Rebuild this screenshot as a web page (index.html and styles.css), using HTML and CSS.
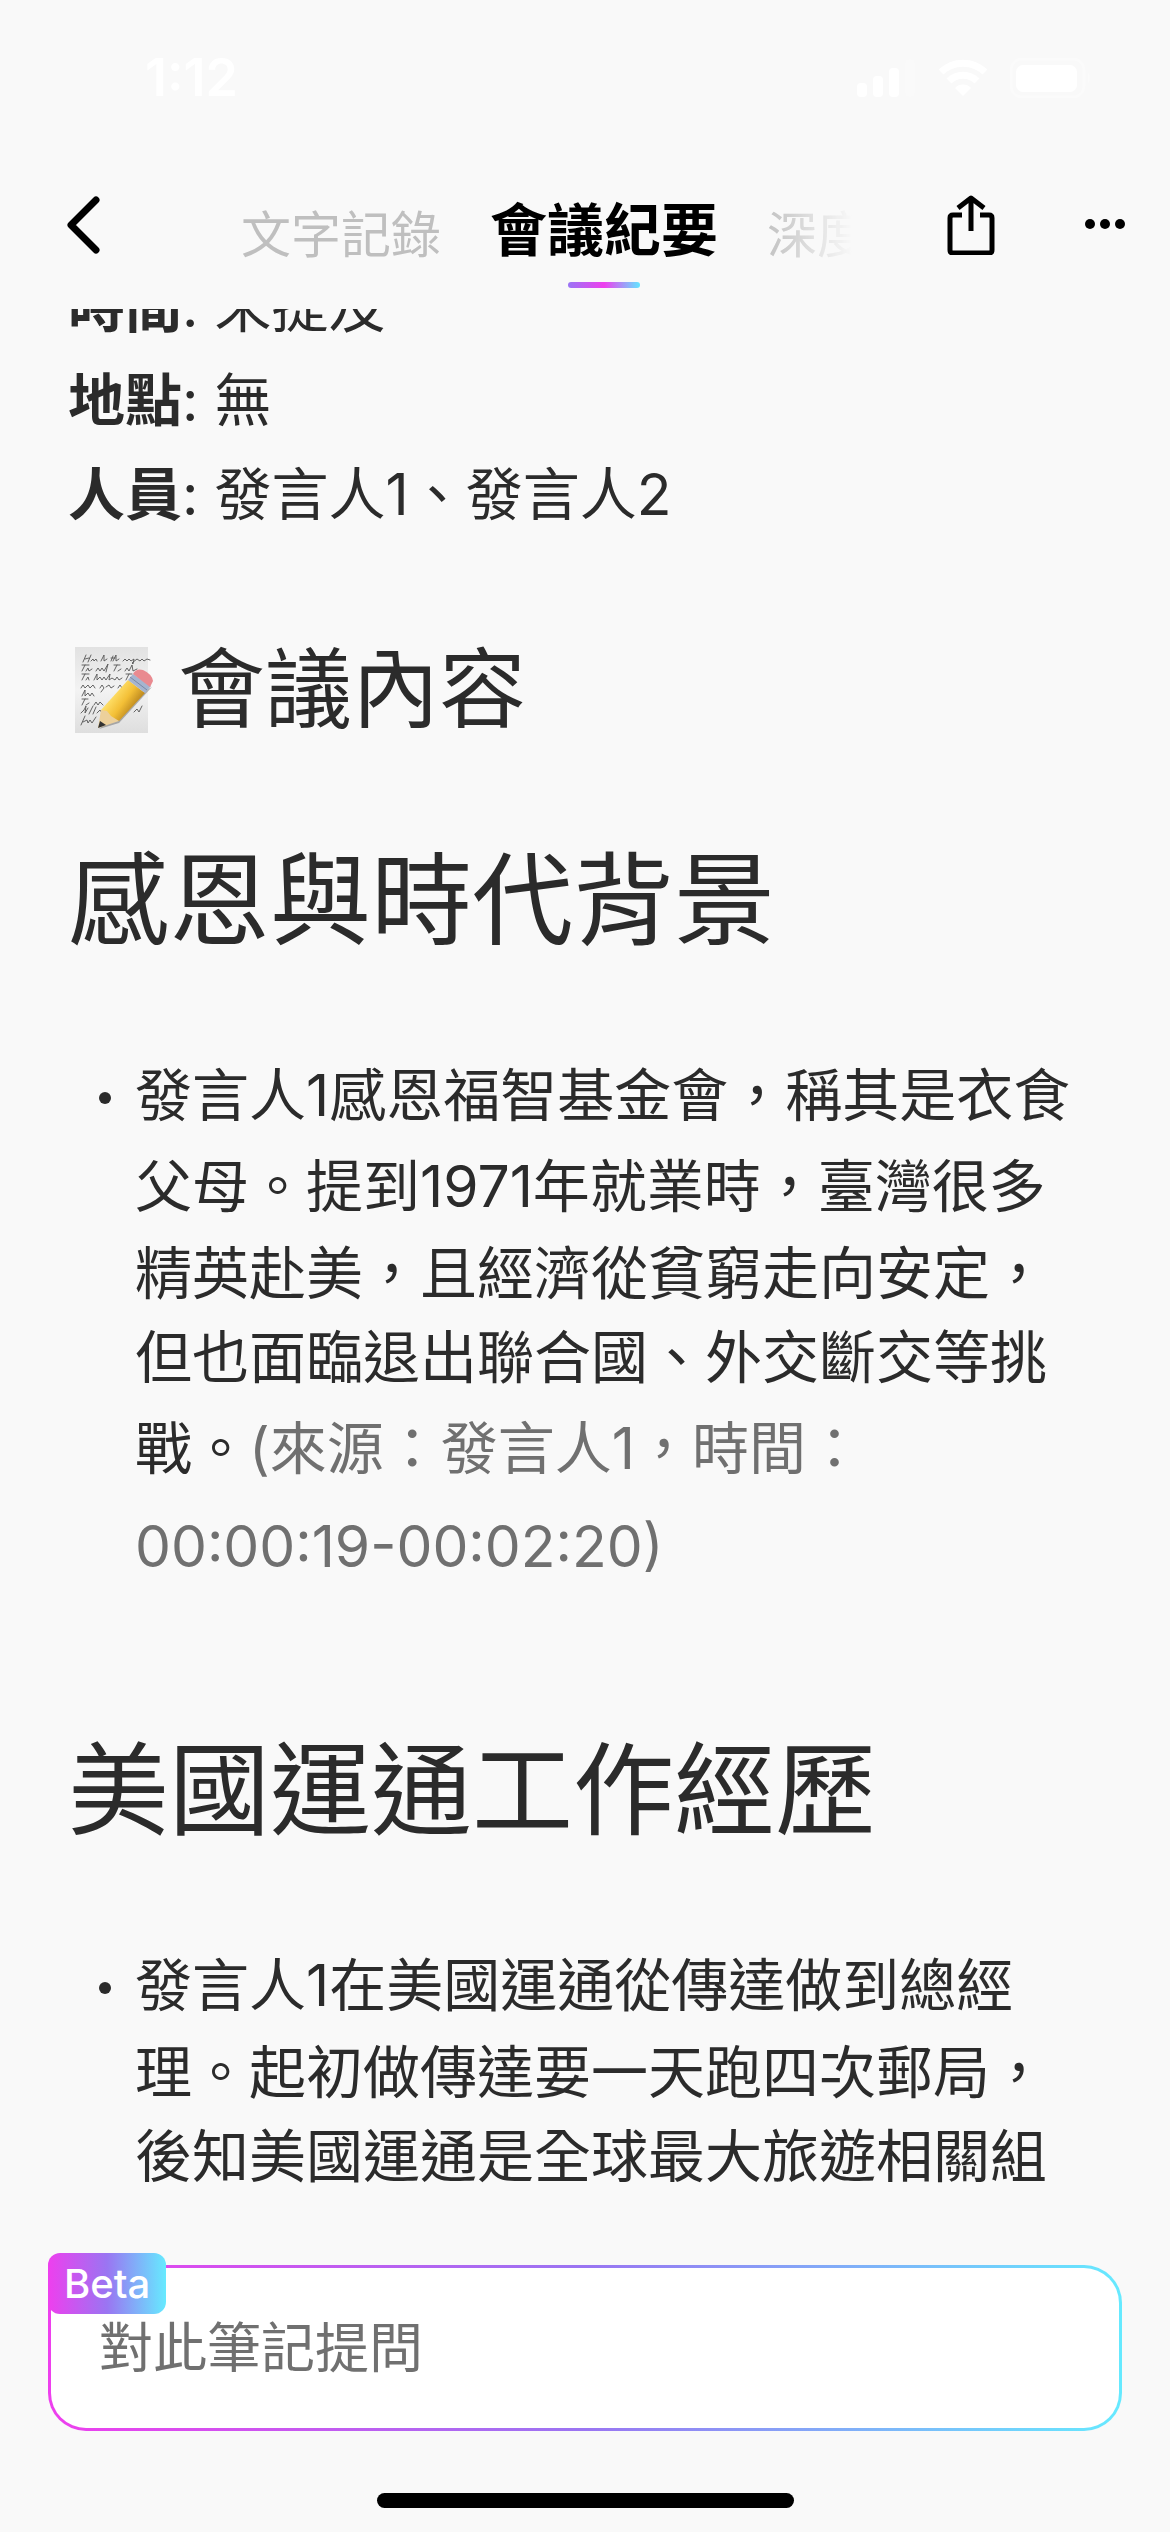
FILE: index.html
```html
<!DOCTYPE html>
<html lang="zh-Hant">
<head>
    <meta charset="UTF-8">
    <meta name="viewport" content="width=device-width, initial-scale=1.0">
    <title>會議紀要</title>
    <link rel="stylesheet" href="styles.css">
</head>
<body>
    <div class="status-bar">
        <span class="status-time">1:12</span>
        <div class="status-icons">
            <svg width="60" height="38" viewBox="0 0 60 38" fill="#fff">
                <rect x="1" y="24" width="10" height="14" rx="4"/>
                <rect x="17" y="17" width="10" height="21" rx="4"/>
                <rect x="33" y="9" width="10" height="29" rx="4"/>
                <rect x="49" y="0" width="10" height="38" rx="4" opacity="0.15"/>
            </svg>
            <svg width="50" height="38" viewBox="0 0 50 38" fill="none" stroke="#fff" stroke-width="7">
                <path d="M3 13a32 32 0 0 1 44 0"/>
                <path d="M11 22a20 20 0 0 1 28 0"/>
                <path d="M25 37l-8-8a11 11 0 0 1 16 0z" fill="#fff" stroke="none"/>
            </svg>
            <svg width="80" height="40" viewBox="0 0 80 40" fill="#fff">
                <rect x="1" y="1" width="73" height="38" rx="11" fill="none" stroke="#fff" stroke-width="3" opacity="0.3"/>
                <rect x="6" y="7" width="61" height="27" rx="7"/>
                <path d="M78 14q4 6 0 12z" opacity="0.3"/>
            </svg>
        </div>
    </div>

    <header class="nav">
        <button class="icon-btn" type="button" aria-label="返回">
            <svg width="33" height="58" viewBox="0 0 33 58" fill="none" stroke="#000" stroke-width="7" stroke-linecap="round" stroke-linejoin="round">
                <path d="M29 4L4 29l25 25"/>
            </svg>
        </button>
        <nav class="tabs">
            <a href="#transcript" class="tab">文字記錄</a>
            <a href="#minutes" class="tab active">會議紀要</a>
            <a href="#depth" class="tab">深度</a>
        </nav>
        <div class="actions">
            <button class="icon-btn" type="button" aria-label="分享">
                <svg width="48" height="60" viewBox="0 0 48 60" fill="none" stroke="#000" stroke-width="5">
                    <path d="M15 20H6q-3 0-3 3v32q0 3 3 3h36q3 0 3-3V23q0-3-3-3h-9"/>
                    <path d="M24 36V4M11 13L24 3l13 10" stroke-linejoin="round"/>
                </svg>
            </button>
            <button class="icon-btn" type="button" aria-label="更多">
                <svg width="40" height="12" viewBox="0 0 40 12">
                    <circle cx="5" cy="5" r="5"/>
                    <circle cx="20" cy="5" r="5"/>
                    <circle cx="35" cy="5" r="5"/>
                </svg>
            </button>
        </div>
    </header>

    <main class="content" id="minutes">
        <div class="note">
            <div class="meta">
                <p><strong>時間</strong>: 未提及</p>
                <p><strong>地點</strong>: 無</p>
                <p><strong>人員</strong>: 發言人1、發言人2</p>
            </div>

            <h2 class="note-title">
                <svg class="memo" width="88" height="90" viewBox="0 0 88 90">
                    <defs>
                        <linearGradient id="paper" x1="0" y1="0" x2="0" y2="1">
                            <stop offset="0" stop-color="#e2e2e2"/>
                            <stop offset="0.5" stop-color="#f3f3f3"/>
                            <stop offset="1" stop-color="#dedede"/>
                        </linearGradient>
                        <linearGradient id="wood" gradientUnits="userSpaceOnUse" x1="44" y1="50" x2="66" y2="66">
                            <stop offset="0" stop-color="#ffe06a"/>
                            <stop offset="0.5" stop-color="#f3bf36"/>
                            <stop offset="1" stop-color="#b5811c"/>
                        </linearGradient>
                    </defs>
                    <rect x="7" y="2" width="73" height="86" fill="url(#paper)"/>
                    <g fill="none" stroke="#555" stroke-width="0.9" stroke-linecap="round" stroke-linejoin="round">
                        <path d="M15 17l3-7m-1 4l4-1m-1 4l3-7m0 6l2-2 1 2 2-2 1 2m4 0l3-6 0 6 3-2m4 2l2-5m-2 2h4m-2 3l3-6 0 6 3-2m4 2l2-2 2 2 2-2 2 2 3-2-1 5-1-1 5-4 3 2 2-2 2 2 3-2 3 1"/>
                        <path d="M14 26l3-6m-3 0h7m-3 6l2-3 1 3 3-2m4 2l2-3 2 3 2-3 2 3 4-7-2 8m8-1l3-6m-3 0h6m-2 6l3-2m4 2l2-3 2 3 3-6 1 6 4-2"/>
                        <path d="M14 35l3-6m-3 0h7m-3 6l2-3 1 3m5 0l3-6 0 6 3-3 2 3 2-3 2 3 4-6-1 6 3-2 3 2 2-3 2 3 3-2m4 2l3-6m-3 0h6"/>
                        <path d="M13 43l2-3 2 3 3-3 2 3 3-3 2 3m5 0l2-3 2 3-3 4m5-5l3-2 2 3 3-2m4 2l2-3 2 3m4 0l3-6"/>
                        <path d="M14 51l3-6 0 6 3-3 2 3 2-3 2 3"/>
                        <path d="M14 60l3-6m-3 0h6m-2 6l3-2m5 2l2-3 2 3 2-3 3 3m4 0l2-3"/>
                        <path d="M13 68l3-3 2-4-1 7 3-5m1 6l4-8m0 8l3-7m1 6l3-3 2 3 4-6"/>
                        <path d="M66 67l3-3 2 3 3-6"/>
                        <path d="M13 80l4-9m-2 6l4-2 1 3 2-3 2 3 4-6"/>
                    </g>
                    <path d="M31 84l20-6 33-36-6 3z" fill="#333" opacity="0.35"/>
                    <path d="M33 65l27-30 17 13-26 28-10-3z" fill="url(#wood)"/>
                    <path d="M33 65l6 1 4 5 8 5-21 7z" fill="#ecd09b"/>
                    <path d="M30 83l2-7 6 4z" fill="#333"/>
                    <path d="M60 35l5-6 18 12-6 7z" fill="#a5b4cf"/>
                    <path d="M62 32l17 13" stroke="#7888a6" fill="none"/>
                    <path d="M65 29q3-6 10-4 9 4 10 11l-3 6z" fill="#e98a90"/>
                </svg>
                <span>會議內容</span>
            </h2>

            <section class="topic">
                <h3>感恩與時代背景</h3>
                <ul>
                    <li>
                        <p>發言人<span class="num">1</span>感恩福智基金會，稱其是衣食父母。提到<span class="num">1971</span>年就業時，臺灣很多精英赴美，且經濟從貧窮走向安定，但也面臨退出聯合國、外交斷交等挑戰。<span class="source">(來源：發言人1，時間：00:00:19-00:02:20)</span></p>
                    </li>
                </ul>
            </section>

            <section class="topic">
                <h3>美國運通工作經歷</h3>
                <ul>
                    <li>
                        <p>發言人<span class="num">1</span>在美國運通從傳達做到總經理。起初做傳達要一天跑四次郵局，後知美國運通是全球最大旅遊相關組</p>
                    </li>
                </ul>
            </section>
        </div>
    </main>

    <footer class="footer">
        <div class="ask-box">
            <label class="beta" for="ask">Beta</label>
            <input id="ask" type="text" placeholder="對此筆記提問">
        </div>
        <div class="home-indicator"></div>
    </footer>
</body>
</html>
```

FILE: styles.css
```css
* {
    margin: 0;
    padding: 0;
    box-sizing: border-box;
}

body {
    display: flex;
    flex-direction: column;
    height: 100vh;
    overflow: hidden;
    font-family: Inter, 'Noto Sans CJK TC', sans-serif;
    font-size: 57px;
    background: #f9f9f9;
    color: #2b2b2b;
}

svg {
    display: block;
    flex-shrink: 0;
}

/* status bar */
.status-bar {
    display: flex;
    align-items: center;
    justify-content: space-between;
    height: 141px;
    padding: 14px 80px 0 145px;
    flex-shrink: 0;
}

.status-time {
    font-size: 52px;
    font-weight: 600;
    color: #fff;
}

.status-icons {
    display: flex;
    align-items: center;
    gap: 22px;
}

/* navigation */
.nav {
    display: flex;
    align-items: center;
    height: 168px;
    padding: 0 45px 0 67px;
    flex-shrink: 0;
}

.icon-btn {
    border: none;
    background: none;
    cursor: pointer;
}

.tabs {
    display: flex;
    align-items: center;
    flex: 1;
    gap: 49px;
    height: 100%;
    margin: 0 95px 0 141px;
    padding-top: 12px;
    overflow: hidden;
    -webkit-mask-image: linear-gradient(to right, #000 calc(100% - 90px), transparent);
    mask-image: linear-gradient(to right, #000 calc(100% - 90px), transparent);
}

.tab {
    flex-shrink: 0;
    font-size: 50px;
    color: #bfbfbf;
    text-decoration: none;
    white-space: nowrap;
}

.tab.active {
    position: relative;
    font-size: 57px;
    line-height: 114px;
    font-weight: bold;
    color: #000;
}

.tab.active::after {
    content: '';
    position: absolute;
    bottom: 0;
    left: 50%;
    width: 72px;
    height: 6px;
    margin-left: -36px;
    border-radius: 3px;
    background: linear-gradient(to right, #9a75f5, #ee3fee 50%, #62e6ff);
}

.actions {
    display: flex;
    align-items: center;
    gap: 90px;
}

/* note, scrolled part way down */
.content {
    flex: 1;
    min-height: 0;
    padding: 0 68px;
    overflow: hidden;
}

.note {
    margin-top: -49px;
}

.meta {
    line-height: 94px;
}

.note-title {
    display: flex;
    align-items: center;
    gap: 22px;
    margin-top: 88px;
    font-size: 87px;
    font-weight: normal;
    line-height: 120px;
}

.topic {
    margin-top: 80px;
}

.topic + .topic {
    margin-top: 124px;
}

.topic h3 {
    font-size: 101px;
    font-weight: normal;
    line-height: 140px;
}

.topic ul {
    margin-top: 80px;
    list-style: none;
}

.topic li {
    display: flex;
    gap: 24px;
    padding-left: 31px;
    line-height: 84px;
}

.topic li::before {
    content: '';
    flex: none;
    width: 12px;
    height: 12px;
    margin-top: 42px;
    border-radius: 50%;
    background: #2b2b2b;
}

.num {
    line-height: 91px;
}

.source {
    line-height: 98px;
    color: #707070;
}

/* question box */
.footer {
    padding: 60px 48px 24px;
    flex-shrink: 0;
}

.ask-box {
    position: relative;
    border: 3px solid transparent;
    border-radius: 38px;
    background: linear-gradient(#fff, #fff) padding-box,
        linear-gradient(to right, #ee3fee, #9a75f2 50%, #66eaff) border-box;
}

.ask-box input {
    display: block;
    width: 100%;
    height: 160px;
    padding: 0 48px;
    border: none;
    outline: none;
    background: none;
    font-family: inherit;
    font-size: 54px;
    color: #2b2b2b;
}

.ask-box input::placeholder {
    color: #707070;
    opacity: 1;
}

.beta {
    position: absolute;
    top: -15px;
    left: -3px;
    padding: 0 16px;
    border-radius: 12px;
    font-size: 40px;
    font-weight: 500;
    line-height: 61px;
    color: #fff;
    background: linear-gradient(to right, #ee3fee, #9a75f2 50%, #66eaff);
}

.home-indicator {
    width: 417px;
    height: 15px;
    margin: 62px auto 0;
    border-radius: 8px;
    background: #000;
}
```
